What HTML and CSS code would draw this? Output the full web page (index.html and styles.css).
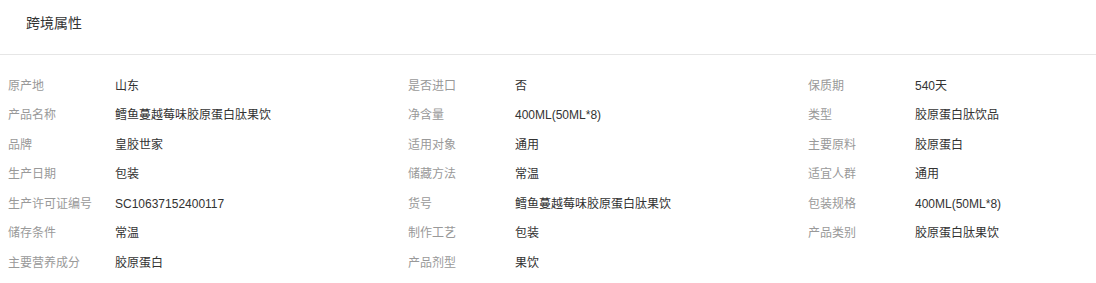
FILE: index.html
```html
<!DOCTYPE html>
<html lang="zh">
<head>
<meta charset="utf-8">
<link rel="stylesheet" href="styles.css">
</head>
<body>
<div class="panel">
  <div class="panel-head">跨境属性</div>
  <div class="attrs">
    <div class="attr"><span class="k">原产地</span><span class="v">山东</span></div>
    <div class="attr"><span class="k">是否进口</span><span class="v">否</span></div>
    <div class="attr"><span class="k">保质期</span><span class="v">540天</span></div>
    <div class="attr"><span class="k">产品名称</span><span class="v">鳕鱼蔓越莓味胶原蛋白肽果饮</span></div>
    <div class="attr"><span class="k">净含量</span><span class="v">400ML(50ML*8)</span></div>
    <div class="attr"><span class="k">类型</span><span class="v">胶原蛋白肽饮品</span></div>
    <div class="attr"><span class="k">品牌</span><span class="v">皇胶世家</span></div>
    <div class="attr"><span class="k">适用对象</span><span class="v">通用</span></div>
    <div class="attr"><span class="k">主要原料</span><span class="v">胶原蛋白</span></div>
    <div class="attr"><span class="k">生产日期</span><span class="v">包装</span></div>
    <div class="attr"><span class="k">储藏方法</span><span class="v">常温</span></div>
    <div class="attr"><span class="k">适宜人群</span><span class="v">通用</span></div>
    <div class="attr"><span class="k">生产许可证编号</span><span class="v">SC10637152400117</span></div>
    <div class="attr"><span class="k">货号</span><span class="v">鳕鱼蔓越莓味胶原蛋白肽果饮</span></div>
    <div class="attr"><span class="k">包装规格</span><span class="v">400ML(50ML*8)</span></div>
    <div class="attr"><span class="k">储存条件</span><span class="v">常温</span></div>
    <div class="attr"><span class="k">制作工艺</span><span class="v">包装</span></div>
    <div class="attr"><span class="k">产品类别</span><span class="v">胶原蛋白肽果饮</span></div>
    <div class="attr"><span class="k">主要营养成分</span><span class="v">胶原蛋白</span></div>
    <div class="attr"><span class="k">产品剂型</span><span class="v">果饮</span></div>
  </div>
</div>
</body>
</html>
```
FILE: styles.css
```css
html, body {
  margin: 0;
  padding: 0;
  background: #fff;
}
body {
  font-family: "Liberation Sans", Arial, "Noto Sans CJK SC", sans-serif;
  color: #333;
}
.panel-head {
  box-sizing: border-box;
  height: 55px;
  padding: 15px 26px 0;
  font-size: 14px;
  line-height: 17px;
  color: #333;
  border-bottom: 1px solid #e6e6e6;
}
.attrs {
  display: grid;
  grid-template-columns: 400px 400px 1fr;
  grid-auto-rows: 29.5px;
  padding: 16px 0 0 8px;
}
.attr {
  display: flex;
  align-items: center;
  font-size: 12px;
  line-height: 16px;
}
.k {
  width: 107px;
  flex: none;
  color: #999;
}
.v {
  color: #333;
}
```
